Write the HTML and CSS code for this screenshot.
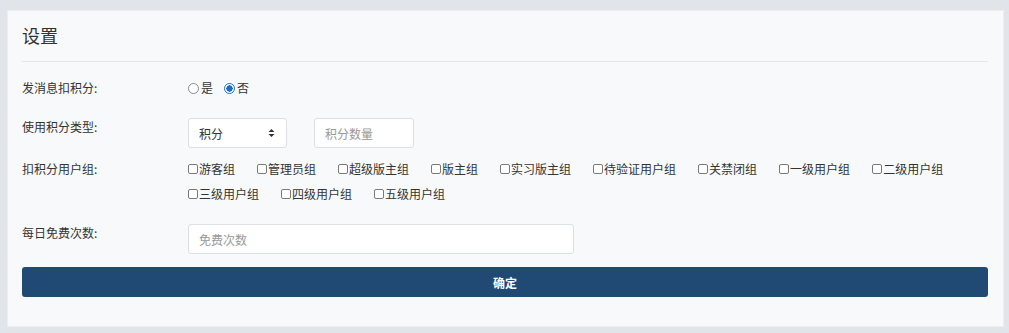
FILE: index.html
```html
<!DOCTYPE html>
<html lang="zh">
<head>
<meta charset="utf-8">
<title>设置</title>
<link rel="stylesheet" href="styles.css">
</head>
<body>
<div class="card">
  <div class="card-header">设置</div>
  <form class="form">
    <div class="row row-radio">
      <div class="label">发消息扣积分:</div>
      <div class="field radios">
        <label class="opt"><input type="radio" name="deduct" class="radio">是</label>
        <label class="opt"><input type="radio" name="deduct" class="radio" checked>否</label>
      </div>
    </div>
    <div class="row row-type">
      <div class="label">使用积分类型:</div>
      <div class="field inline">
        <div class="select">
          <span>积分</span>
          <svg class="caret" width="7" height="10" viewBox="0 0 7 10"><path d="M3.5 1 L6.5 4 L0.5 4 Z M3.5 9 L6.5 6 L0.5 6 Z" fill="#333"/></svg>
        </div>
        <input class="input small" type="text" placeholder="积分数量">
      </div>
    </div>
    <div class="row row-groups">
      <div class="label tall">扣积分用户组:</div>
      <div class="field checks">
        <label class="chk"><input type="checkbox" class="box">游客组</label>
        <label class="chk"><input type="checkbox" class="box">管理员组</label>
        <label class="chk"><input type="checkbox" class="box">超级版主组</label>
        <label class="chk"><input type="checkbox" class="box">版主组</label>
        <label class="chk"><input type="checkbox" class="box">实习版主组</label>
        <label class="chk"><input type="checkbox" class="box">待验证用户组</label>
        <label class="chk"><input type="checkbox" class="box">关禁闭组</label>
        <label class="chk"><input type="checkbox" class="box">一级用户组</label>
        <label class="chk"><input type="checkbox" class="box">二级用户组</label>
        <label class="chk"><input type="checkbox" class="box">三级用户组</label>
        <label class="chk"><input type="checkbox" class="box">四级用户组</label>
        <label class="chk"><input type="checkbox" class="box">五级用户组</label>
      </div>
    </div>
    <div class="row row-free">
      <div class="label">每日免费次数:</div>
      <div class="field">
        <input class="input wide" type="text" placeholder="免费次数">
      </div>
    </div>
    <button type="button" class="btn">确定</button>
  </form>
</div>
</body>
</html>
```
FILE: styles.css
```css
html, body {
  background: #e1e5e9;
}
body {
  margin: 10px 5px 0 7px;
  font-family: "Noto Sans CJK SC", "Noto Sans", sans-serif;
  font-size: 12px;
  color: #333;
}
.card {
  background: #f8f9fb;
  border: 1px solid #eceef1;
  box-shadow: 0 1px 2px rgba(0,0,0,0.06);
  padding: 0 15px 27px 14px;
  box-sizing: border-box;
  height: 317px;
}
.card-header {
  font-size: 18px;
  line-height: 24px;
  padding: 12px 0 14px 0;
  border-bottom: 1px solid #e2e7ed;
  color: #333;
}
.form {
  display: flex;
  flex-direction: column;
  padding-top: 16px;
}
.row {
  display: flex;
  align-items: flex-start;
}
.label {
  width: 166px;
  flex: none;
  line-height: 18px;
}
.row-radio .label { line-height: 20px; }
.label.tall { line-height: 25px; }
.field { flex: 1; }
.radios {
  display: flex;
  align-items: center;
  gap: 11px;
  line-height: 20px;
}
.opt {
  display: inline-flex;
  align-items: center;
  gap: 2px;
}
.radio {
  appearance: none;
  -webkit-appearance: none;
  width: 11px;
  height: 11px;
  margin: 0;
  border: 1px solid #8a8a8a;
  border-radius: 50%;
  background: #fff;
  box-sizing: border-box;
}
.radio:checked {
  border-color: #1b6cc4;
  background: radial-gradient(circle, #1b6cc4 0 3px, #fff 3.3px);
}
.row-type { margin-top: 20px; }
.inline {
  display: flex;
  gap: 27px;
}
.select {
  width: 99px;
  height: 30px;
  box-sizing: border-box;
  border: 1px solid #dcdfe3;
  border-radius: 3px;
  background: #fff;
  display: flex;
  align-items: center;
  justify-content: space-between;
  padding: 0 11px 0 10px;
}
.caret { display: block; }
.input {
  height: 30px;
  box-sizing: border-box;
  border: 1px solid #dcdfe3;
  border-radius: 3px;
  background: #fff;
  padding: 0 10px;
  font-family: inherit;
  font-size: 12px;
  color: #333;
  outline: none;
}
.input::placeholder { color: #999; }
.small { width: 100px; }
.wide { width: 386px; }
.row-groups { margin-top: 8px; }
.checks {
  display: flex;
  flex-wrap: wrap;
  line-height: 25px;
  max-width: 800px;
}
.chk {
  display: inline-flex;
  align-items: center;
  margin-right: 22px;
}
.box {
  appearance: none;
  -webkit-appearance: none;
  width: 10px;
  height: 10px;
  margin: 0 1px 0 0;
  border: 1px solid #7a7a7a;
  border-radius: 2px;
  background: #fff;
  box-sizing: border-box;
}
.row-free { margin-top: 18px; }
.btn {
  margin-top: 13px;
  height: 30px;
  border: none;
  border-radius: 3px;
  background: #204a74;
  color: #fff;
  font-family: inherit;
  font-size: 12px;
  font-weight: bold;
  cursor: pointer;
}
```
